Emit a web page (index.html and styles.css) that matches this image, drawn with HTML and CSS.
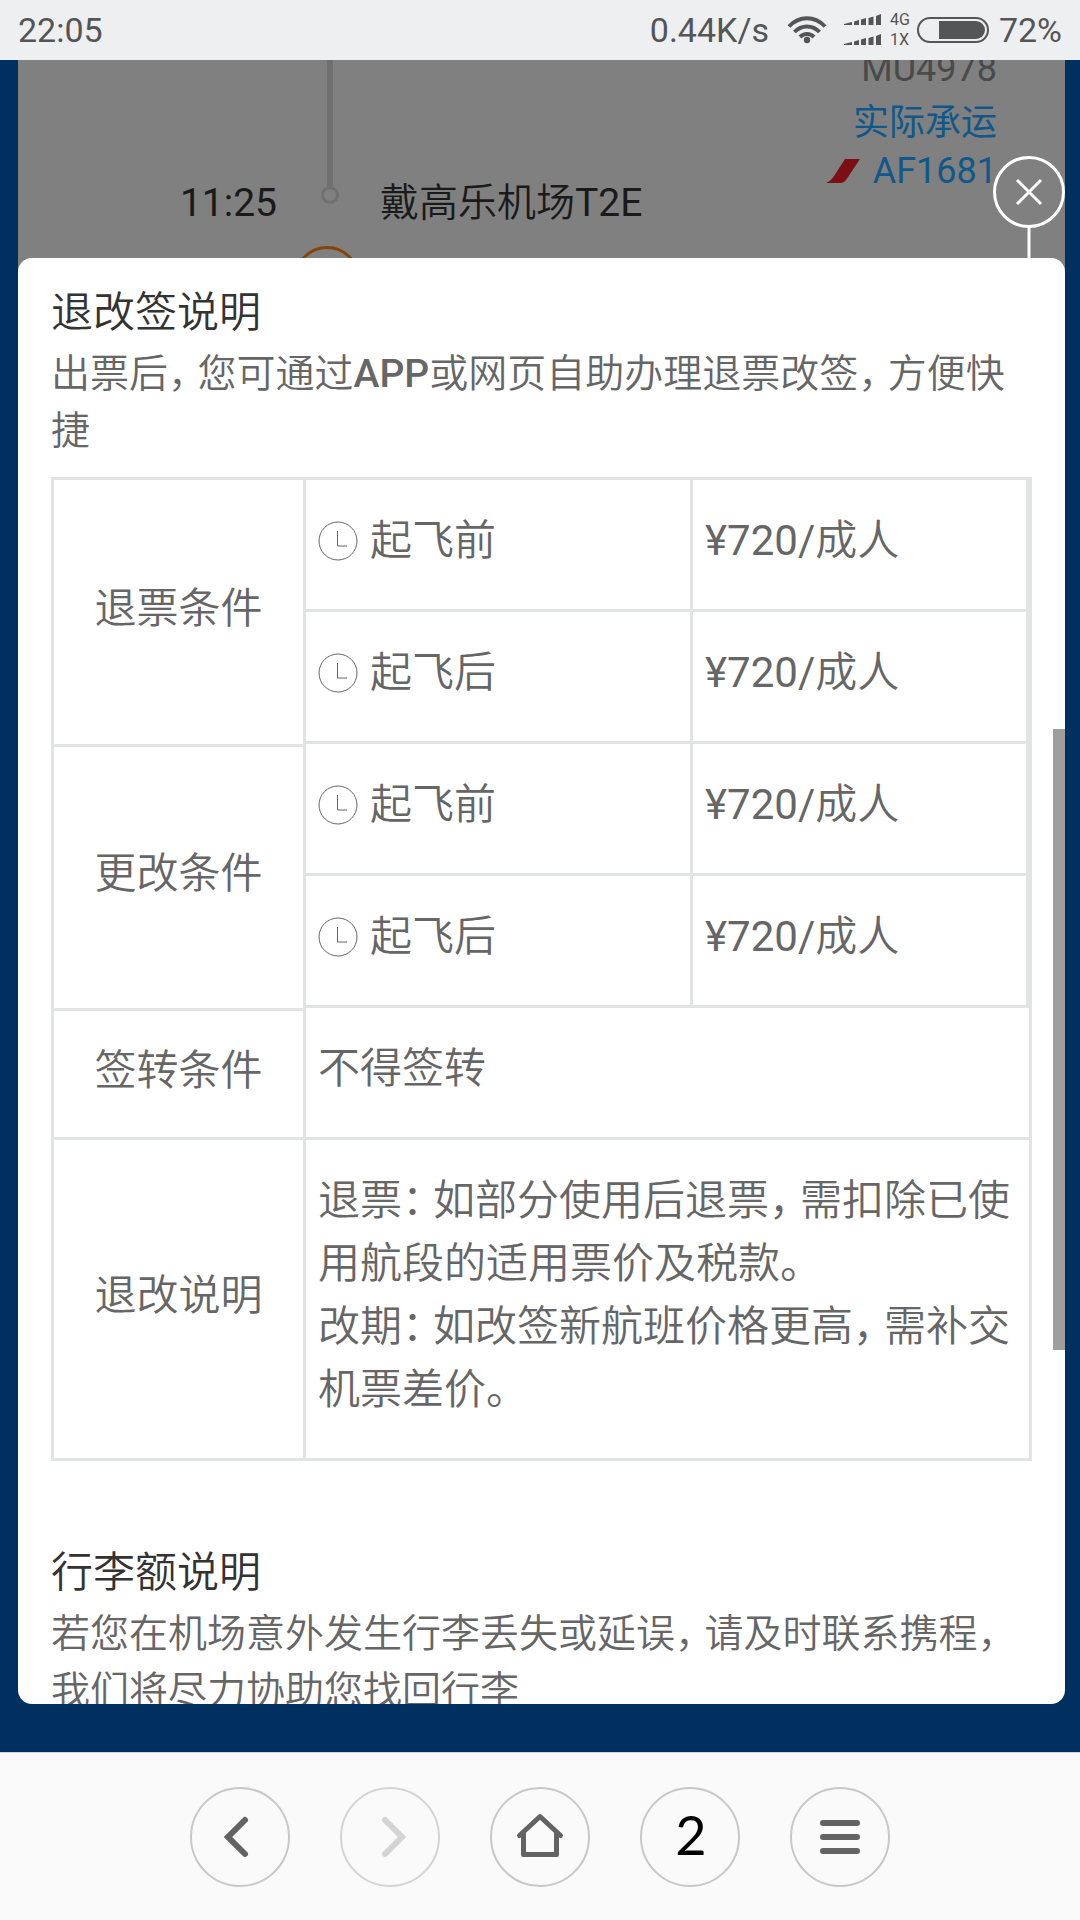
FILE: index.html
```html
<!DOCTYPE html>
<html lang="zh-CN">
<head>
<meta charset="utf-8">
<meta name="viewport" content="width=device-width, initial-scale=1">
<title>退改签说明</title>
<link rel="stylesheet" href="styles.css">
</head>
<body>
<header class="status">
  <span class="status-time">22:05</span>
  <span class="status-speed">0.44K/s</span>
  <svg class="status-wifi" width="40" height="28" viewBox="0 0 40 28" aria-hidden="true">
    <g fill="none" stroke="#555" stroke-width="4">
      <path d="M2 10.500C12 -.5 28 -.5 38 10.500"/>
      <path d="M7.500 16C14.500 8.500 25.500 8.500 32.500 16"/>
      <path d="M13 21C17 17 23 17 27 21"/>
    </g>
    <circle cx="20" cy="24" r="3.200" fill="#555"/>
  </svg>
  <svg class="status-signal" width="38" height="32" viewBox="0 0 38 32" aria-hidden="true">
    <defs>
      <path id="bars" d="M0 11V10L8 8V11ZM10 11V7.500L15 6V11ZM17 11V5.500L22 4V11ZM24.500 11V4L29.500 2.500V11ZM32 11V2L37 0V11Z"/>
    </defs>
    <use href="#bars" fill="#555"/>
    <use href="#bars" y="20" fill="#555"/>
  </svg>
  <span class="status-net"><span>4G</span><span>1X</span></span>
  <svg class="status-battery" width="72" height="26" viewBox="0 0 72 26" aria-hidden="true">
    <rect x="1" y="1" width="70" height="24" rx="12" fill="none" stroke="#555" stroke-width="2"/>
    <path d="M22 4H59A9 9 0 0 1 59 22H22Z" fill="#555"/>
  </svg>
  <span class="status-level">72%</span>
</header>

<main class="page">
  <section class="trip">
    <time class="trip-time">11:25</time>
    <svg class="trip-rail" width="103" height="198" viewBox="0 0 103 198" aria-hidden="true">
      <path d="M53 0V126" stroke="#707070" stroke-width="6"/>
      <circle cx="53" cy="135" r="7.500" fill="#808080" stroke="#707070" stroke-width="3"/>
      <circle cx="50" cy="219" r="31.500" fill="none" stroke="#854507" stroke-width="3"/>
    </svg>
    <span class="trip-station">戴高乐机场<span class="latin">T2E</span></span>
    <div class="trip-flight">
      <span class="trip-number">MU4978</span>
      <span class="trip-carrier">实际承运</span>
      <span class="trip-carrier">
        <svg width="35" height="24" viewBox="0 0 35 24" aria-hidden="true"><path d="M19 0H34L20 21Q18 24 14 24H0Q5 22 8 17Z" fill="#7c0f14"/></svg>
        AF1681
      </span>
    </div>
  </section>

  <button class="close" type="button" aria-label="关闭">
    <svg width="72" height="102" viewBox="0 0 72 102" fill="none" stroke="#fff" stroke-width="3" aria-hidden="true">
      <circle cx="36" cy="36" r="34.500"/>
      <path d="M24 24L48 48M48 24L24 48M36 71V102"/>
    </svg>
  </button>

  <article class="sheet">
    <h2 class="sheet-title">退改签说明</h2>
    <p class="sheet-text">出票后<span class="punct">，</span>您可通过<b>APP</b>或网页自助办理退票改签<span class="punct">，</span>方便快捷</p>

    <table class="rules">
      <colgroup><col class="col-name"><col class="col-when"><col class="col-fee"></colgroup>
      <tbody>
        <tr class="fee-row">
          <th scope="rowgroup" rowspan="2">退票条件</th>
          <td><span class="when"><svg width="40" height="40" viewBox="0 0 40 40" aria-hidden="true"><circle cx="20" cy="20" r="19"/><path d="M19.500 10V25H29"/></svg>起飞前</span></td>
          <td><span class="latin">¥720/</span>成人</td>
        </tr>
        <tr class="fee-row">
          <td><span class="when"><svg width="40" height="40" viewBox="0 0 40 40" aria-hidden="true"><circle cx="20" cy="20" r="19"/><path d="M19.500 10V25H29"/></svg>起飞后</span></td>
          <td><span class="latin">¥720/</span>成人</td>
        </tr>
      </tbody>
      <tbody>
        <tr class="fee-row">
          <th scope="rowgroup" rowspan="2">更改条件</th>
          <td><span class="when"><svg width="40" height="40" viewBox="0 0 40 40" aria-hidden="true"><circle cx="20" cy="20" r="19"/><path d="M19.500 10V25H29"/></svg>起飞前</span></td>
          <td><span class="latin">¥720/</span>成人</td>
        </tr>
        <tr class="fee-row">
          <td><span class="when"><svg width="40" height="40" viewBox="0 0 40 40" aria-hidden="true"><circle cx="20" cy="20" r="19"/><path d="M19.500 10V25H29"/></svg>起飞后</span></td>
          <td><span class="latin">¥720/</span>成人</td>
        </tr>
      </tbody>
      <tbody>
        <tr>
          <th scope="row">签转条件</th>
          <td colspan="2">不得签转</td>
        </tr>
        <tr class="note-row">
          <th scope="row">退改说明</th>
          <td colspan="2">退票<span class="punct">：</span>如部分使用后退票<span class="punct">，</span>需扣除已使用航段的适用票价及税款。<br>改期<span class="punct">：</span>如改签新航班价格更高<span class="punct">，</span>需补交机票差价。</td>
        </tr>
      </tbody>
    </table>

    <h2 class="sheet-title">行李额说明</h2>
    <p class="sheet-text">若您在机场意外发生行李丢失或延误<span class="punct">，</span>请及时联系携程<span class="punct">，</span><br>我们将尽力协助您找回行李</p>
    <div class="sheet-thumb"></div>
  </article>
</main>

<nav class="toolbar">
  <button class="tool" type="button" aria-label="后退">
    <svg width="96" height="96" viewBox="0 0 96 96" aria-hidden="true"><path d="M53 31L36 48L53 65" stroke-width="6" stroke-linecap="round"/></svg>
  </button>
  <button class="tool tool-off" type="button" aria-label="前进" disabled>
    <svg width="96" height="96" viewBox="0 0 96 96" aria-hidden="true"><path d="M43 31L60 48L43 65" stroke-width="6" stroke-linecap="round"/></svg>
  </button>
  <button class="tool" type="button" aria-label="主页">
    <svg width="96" height="96" viewBox="0 0 96 96" aria-hidden="true"><path d="M27.500 46.500L48 27.500L68.500 46.500M31.500 44V65.500H64.500V44" stroke-width="5" stroke-linecap="round" stroke-linejoin="round"/></svg>
  </button>
  <button class="tool tool-tabs" type="button" aria-label="2 个窗口">2</button>
  <button class="tool" type="button" aria-label="菜单">
    <svg width="96" height="96" viewBox="0 0 96 96" aria-hidden="true"><path d="M31 34H65M31 48H65M31 62H65" stroke-width="6" stroke-linecap="round"/></svg>
  </button>
</nav>
</body>
</html>
```
FILE: styles.css
```css
* {
  box-sizing: border-box;
}

body {
  display: flex;
  flex-direction: column;
  height: 100vh;
  margin: 0;
  background: #003060;
  color: #666;
  font-family: Roboto, "Noto Sans CJK SC", sans-serif;
  font-weight: 400;
}

svg {
  display: block;
  flex: none;
}

button {
  padding: 0;
  border: 0;
  background: none;
}

/* Phone status bar */
.status {
  display: flex;
  flex: none;
  align-items: center;
  height: 60px;
  padding: 0 18px;
  background: #edeff1;
  color: #555;
  font-size: 34px;
}

.status-time {
  margin-right: auto;
}

.status-wifi {
  margin-left: 18px;
}

.status-signal {
  margin-left: 17px;
}

.status-net {
  display: flex;
  flex-direction: column;
  margin: 0 7px 0 8px;
  font-size: 16px;
  line-height: 20px;
}

.status-level {
  margin-left: 10px;
}

/* Dimmed itinerary behind the sheet */
.page {
  position: relative;
  display: flex;
  flex: 1;
  flex-direction: column;
  min-height: 0;
  padding: 0 15px 48px 18px;
}

.trip {
  display: flex;
  flex: none;
  align-items: flex-end;
  height: 214px;
  margin-bottom: -16px;
  padding-bottom: 16px;
  overflow: hidden;
  background: #808080;
  color: #1a1a1a;
  font-size: 39px;
  line-height: 48px;
}

.trip-time {
  width: 259px;
  padding-bottom: 31px;
  text-align: right;
}

.trip-station {
  padding-bottom: 31px;
  font-weight: 350;
}

.trip-flight {
  display: flex;
  flex-direction: column;
  align-items: flex-end;
  margin-left: auto;
  padding: 0 68px 63px 0;
  font-size: 36px;
}

.trip-number {
  margin-bottom: 6px;
  color: #4a4a4a;
}

.trip-carrier {
  display: flex;
  align-items: center;
  gap: 12px;
  color: #10588a;
}

.close {
  position: absolute;
  top: 96px;
  right: 15px;
  cursor: pointer;
}

/* Rules sheet */
.sheet {
  position: relative;
  flex: 1;
  min-height: 0;
  padding: 23px 33px;
  overflow: hidden;
  border-radius: 14px;
  background: #fff;
}

.sheet-title {
  margin: 0;
  color: #333;
  font-size: 42px;
  font-weight: 350;
  line-height: 63px;
}

.sheet-text {
  margin: 2px 0 0;
  font-size: 39px;
  font-weight: 350;
  line-height: 57px;
}

.sheet-text b {
  font-weight: 500;
}

/* Half-width punctuation with a small gap after it */
.punct {
  margin-right: 10px;
  font-feature-settings: "halt";
}

/* Roboto has no 350 weight, so Latin runs step back up to regular */
.latin {
  font-weight: 400;
}

.rules {
  width: 100%;
  margin: 17px 0 80px;
  border: 3px solid #e2e3e5;
  border-spacing: 0;
  table-layout: fixed;
  font-size: 42px;
  line-height: 63px;
}

.col-name {
  width: 252px;
}

.col-fee {
  width: 336px;
}

.rules th,
.rules td {
  height: 129px;
  padding: 26px 12px 34px;
  border: 0 solid #e2e3e5;
  font-weight: 350;
  text-align: left;
}

.rules th {
  padding-right: 0;
  padding-left: 0;
  border-right-width: 3px;
  text-align: center;
}

.rules tbody + tbody th,
.rules .note-row td {
  border-top-width: 3px;
}

.rules .fee-row td {
  height: 132px;
  border-right-width: 3px;
  border-bottom-width: 3px;
}

.rules .note-row td {
  height: 321px;
}

.when {
  display: flex;
  align-items: center;
  gap: 12px;
}

.when svg {
  fill: none;
  stroke: #666;
  stroke-width: 1px;
}

.sheet-thumb {
  position: absolute;
  top: 471px;
  right: 0;
  width: 12px;
  height: 621px;
  background: #9e9e9e;
}

/* Browser toolbar */
.toolbar {
  display: flex;
  flex: none;
  justify-content: center;
  gap: 50px;
  padding: 34px 0 33px;
  border-top: 1px solid #d5d8dc;
  background: #fafafa;
}

.tool {
  display: flex;
  align-items: center;
  justify-content: center;
  width: 100px;
  height: 100px;
  border: 2px solid #c8c8c8;
  border-radius: 50%;
}

.tool svg {
  fill: none;
  stroke: #636363;
}

.tool-off {
  border-color: #d4d4d4;
}

.tool-off svg {
  stroke: #d4d4d4;
}

.tool-tabs {
  padding: 0 0 6px 2px;
  color: #000;
  font-family: Lato, sans-serif;
  font-size: 54px;
  font-weight: 400;
}
```
